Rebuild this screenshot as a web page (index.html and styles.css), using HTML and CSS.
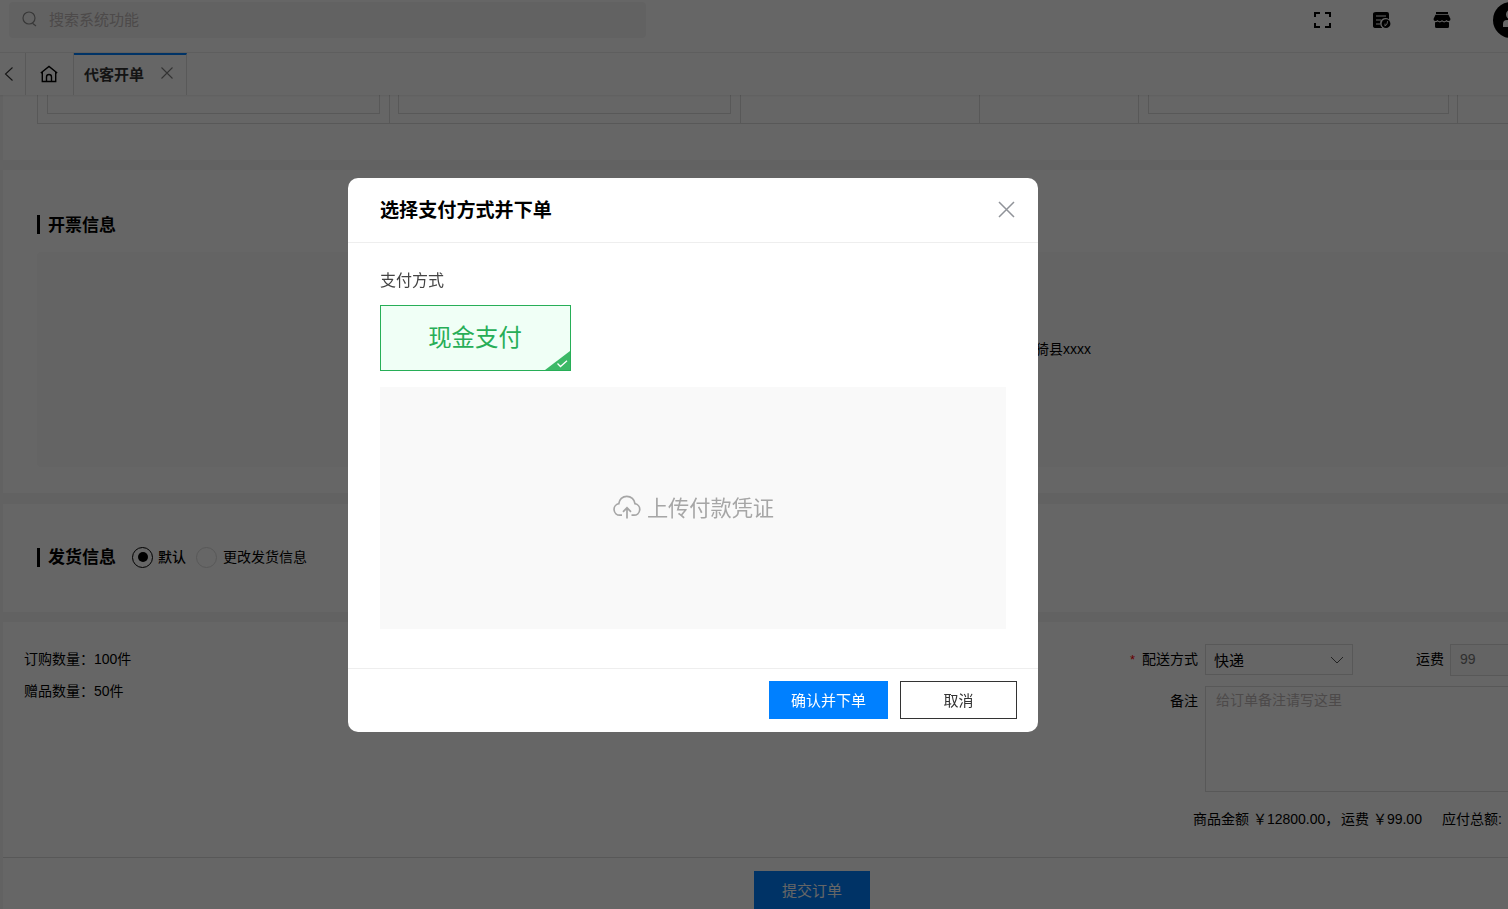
FILE: index.html
```html
<!DOCTYPE html>
<html lang="zh-CN">

<head>
    <meta charset="UTF-8">
    <title>代客开单</title>
    <link rel="stylesheet" href="styles.css">
</head>

<body>
    <div class="page">
        <div class="topbar">
            <div class="search">
                <svg width="16" height="16" viewBox="0 0 16 16" fill="none" stroke="#8c8c8c" stroke-width="1.2">
                    <circle cx="7" cy="7" r="6" />
                    <path d="M10.5 12.2 L14 15" />
                </svg>
                <span>搜索系统功能</span>
            </div>
            <div class="top-icons">
                <svg width="18" height="18" viewBox="0 0 18 18" fill="none" stroke="#000" stroke-width="2">
                    <path d="M2 6V2H7 M12 2H17V6 M17 12V16H12 M7 16H2V12" />
                </svg>
                <svg width="18" height="18" viewBox="0 0 18 18">
                    <path d="M3 1H14Q16 1 16 3V8.2A5 5 0 0 0 9 16.5V17H3Q0 17 0 15V3Q0 1 3 1Z" fill="#000" />
                    <path d="M3 5H13 M3 9H8 M3 13H7" stroke="#fff" stroke-width="1.2" />
                    <circle cx="13" cy="12.7" r="4.4" fill="#000" />
                    <path d="M14.6 10.2Q14.6 13.5 12 15.2 M12 12.6V15" fill="none" stroke="#fff" stroke-width=".9" />
                </svg>
                <svg width="18" height="18" viewBox="0 0 18 18">
                    <path d="M3 1H15V3H3Z M2.5 3.7H15.5L17.5 8Q17.5 10 15.7 10Q14.2 10 13.4 9Q12.3 10.2 11.2 10.2Q10 10.2 9 9Q8 10.2 6.8 10.2Q5.6 10.2 4.6 9Q3.8 10 2.3 10Q.5 10 .5 8Z" />
                    <path d="M2 11.3Q3.6 11.4 4.7 10.6Q6.8 12.2 9 10.6Q11.2 12.2 13.3 10.6Q14.5 11.4 16 11.3V15.5Q16 17 14.5 17H3.5Q2 17 2 15.5Z" />
                </svg>
            </div>
            <div class="avatar">
                <svg width="36" height="36" viewBox="0 0 36 36" fill="#fff">
                    <circle cx="18" cy="12.5" r="5" />
                    <path d="M10 25V22Q10 18 14 18H22Q26 18 26 22V25Z" />
                </svg>
            </div>
        </div>

        <div class="tabs">
            <div class="tab-back">
                <svg width="10" height="14" viewBox="0 0 10 14" fill="none" stroke="#333" stroke-width="1.1">
                    <path d="M8.5 .5L1.5 7L8.5 13.5" />
                </svg>
            </div>
            <div class="tab-home">
                <svg width="18" height="18" viewBox="0 0 18 18" fill="none" stroke="#000" stroke-width="1.4">
                    <path d="M.8 8L9 1.5L17.2 8 M2.3 7V16.5H15.7V7 M6.5 16.5V12Q6.5 9.5 9 9.5Q11.5 9.5 11.5 12V16.5" />
                </svg>
            </div>
            <div class="tab active">
                <span>代客开单</span>
                <svg width="12" height="12" viewBox="0 0 12 12" fill="none" stroke="#808080" stroke-width="1.1">
                    <path d="M.5 .5L11.5 11.5M11.5 .5L.5 11.5" />
                </svg>
            </div>
        </div>

        <div class="content">
            <div class="card goods">
                <div class="goods-row">
                    <div class="cell"><div class="cell-input"></div></div>
                    <div class="cell"><div class="cell-input"></div></div>
                    <div class="cell"></div>
                    <div class="cell"></div>
                    <div class="cell"><div class="cell-input"></div></div>
                    <div class="cell"></div>
                </div>
            </div>

            <div class="card invoice">
                <h3 class="title">开票信息</h3>
                <div class="invoice-panel">临猗县xxxx</div>
            </div>

            <div class="card delivery">
                <h3 class="title">发货信息</h3>
                <span class="radio checked"></span>
                <span class="radio-label on">默认</span>
                <span class="radio"></span>
                <span class="radio-label">更改发货信息</span>
            </div>

            <div class="card order">
                <div class="counts">
                    <div>订购数量：100件</div>
                    <div>赠品数量：50件</div>
                </div>
                <div class="order-form">
                    <div class="form-row">
                        <label><i>*</i>配送方式</label>
                        <div class="select">
                            <span>快递</span>
                            <svg width="14" height="8" viewBox="0 0 14 8" fill="none" stroke="#555">
                                <path d="M1 1L7 7L13 1" />
                            </svg>
                        </div>
                        <label class="freight">运费</label>
                        <div class="input disabled">99</div>
                    </div>
                    <div class="form-row">
                        <label>备注</label>
                        <div class="textarea">给订单备注请写这里</div>
                    </div>
                    <div class="totals">
                        <span class="t-goods">商品金额 ￥12800.00，</span>
                        <span class="t-freight">运费 ￥99.00</span>
                        <span>应付总额:</span>
                    </div>
                </div>
            </div>
            <div class="submit-bar">
                <div class="btn btn-submit">提交订单</div>
            </div>
        </div>
    </div>

    <div class="mask">
        <div class="dialog">
            <div class="dialog-header">
                <h3>选择支付方式并下单</h3>
                <svg width="17" height="17" viewBox="0 0 17 17" fill="none" stroke="#909399" stroke-width="1.5">
                    <path d="M1 1L16 16M16 1L1 16" />
                </svg>
            </div>
            <div class="dialog-body">
                <div class="pay-label">支付方式</div>
                <div class="pay-option">
                    <span>现金支付</span>
                    <svg class="pay-check" width="25" height="19" viewBox="0 0 25 19">
                        <path d="M25 0V19H0Z" fill="#3cb967" />
                        <path d="M12.5 12.5L15.5 15.5L22 9.8" fill="none" stroke="#fff" stroke-width="1.3" />
                    </svg>
                </div>
                <div class="upload">
                    <svg width="28" height="24" viewBox="0 0 28 24" fill="none" stroke="#a6a6a6" stroke-width="1.7">
                        <path d="M9 20.2H7A5.8 5.8 0 0 1 5.8 8.7C6.2 4.5 9.5 1.3 13.8 1.3S21.5 4.5 22 8.7A5.8 5.8 0 0 1 20.8 20.2H18.5" />
                        <path d="M14 23.5V13 M10 16.8L14 12.8L18 16.8" />
                    </svg>
                    <span>上传付款凭证</span>
                </div>
            </div>
            <div class="dialog-footer">
                <div class="btn btn-primary">确认并下单</div>
                <div class="btn btn-cancel">取消</div>
            </div>
        </div>
    </div>
</body>

</html>
```

FILE: styles.css
```css
* {
    box-sizing: border-box;
}

body,
html {
    margin: 0;
    padding: 0;
    height: 100%;
    overflow: hidden;
    font-family: "Liberation Sans", "Noto Sans CJK SC", sans-serif;
    font-size: 14px;
    color: #000;
}

h3 {
    margin: 0;
}

svg {
    display: block;
    flex: none;
}

.page {
    height: 100vh;
    overflow: hidden;
    display: flex;
    flex-direction: column;
    background: #f5f5f5;
    white-space: nowrap;
}

/* top bar */
.topbar {
    flex: none;
    display: flex;
    height: 53px;
    padding: 2px 0 0 9px;
    background: #fff;
    border-bottom: 1px solid #ebebeb;
    overflow: hidden;
}

.search {
    display: flex;
    align-items: center;
    gap: 11px;
    width: 637px;
    height: 36px;
    padding: 0 0 2px 13px;
    background: #f5f5f5;
    border-radius: 4px;
    font-size: 15px;
    color: #c0b8b8;
}

.search span {
    padding-bottom: 2px;
}

.top-icons {
    display: flex;
    align-items: center;
    gap: 42px;
    height: 36px;
    margin-left: auto;
    margin-right: 42px;
}

.avatar {
    flex: none;
    width: 36px;
    height: 36px;
    margin-right: -21px;
    border-radius: 50%;
    background: #000;
}

/* tabs */
.tabs {
    flex: none;
    display: flex;
    height: 42px;
    background: #fff;
    box-shadow: 0 1px 2px rgba(0, 0, 0, 0.08);
    position: relative;
}

.tab-back {
    display: flex;
    align-items: center;
    width: 26px;
    padding: 0 0 1px 4px;
    border-right: 1px solid #dedede;
}

.tab-home {
    display: flex;
    align-items: center;
    justify-content: center;
    width: 48px;
    padding-right: 2px;
    border-right: 1px solid #dedede;
}

.tab {
    display: flex;
    align-items: center;
    gap: 17px;
    width: 113px;
    padding: 0 0 4px 10px;
    border-right: 1px solid #dedede;
    font-size: 15px;
    font-weight: bold;
    color: #333;
}

.tab.active {
    border-top: 2px solid #0080ff;
}

/* cards */
.content {
    flex: 1;
    display: flex;
    flex-direction: column;
    padding-left: 3px;
    overflow: hidden;
}

.card {
    flex: none;
    background: #fff;
}

.goods {
    height: 65px;
    margin-bottom: 10px;
    padding-left: 34px;
    overflow: hidden;
}

.goods-row {
    display: grid;
    grid-template-columns: 353px 351px 239px 159px 319px 60px;
    height: 29px;
    border-bottom: 1px solid #dcdcdc;
}

.cell {
    padding: 0 9px 0 8px;
    border-right: 1px solid #dcdcdc;
}

.cell:first-child {
    padding: 0 9px;
    border-left: 1px solid #dcdcdc;
}

.cell:nth-child(5) {
    padding: 0 8px 0 9px;
}

.cell-input {
    height: 19px;
    border: 1px solid #dcdcdc;
    border-top: none;
}

.title {
    display: flex;
    align-items: center;
    height: 19px;
    padding: 0 0 3px 8px;
    border-left: 3px solid #000;
    font-size: 17px;
}

.invoice {
    height: 323px;
    margin-bottom: 11px;
    padding: 45px 0 0 34px;
}

.invoice-panel {
    height: 215px;
    margin-top: 18px;
    padding: 87px 0 0 984px;
    line-height: 21px;
    background: #fafafa;
    border-radius: 4px;
}

.delivery {
    display: flex;
    align-items: center;
    height: 108px;
    margin-bottom: 10px;
    padding: 0 0 2px 34px;
}

.radio {
    width: 21px;
    height: 21px;
    margin-left: 10px;
    border: 1px solid #dcdcdc;
    border-radius: 50%;
}

.radio.checked {
    display: flex;
    align-items: center;
    justify-content: center;
    margin-left: 16px;
    border-color: #000;
}

.radio.checked::after {
    content: "";
    width: 10px;
    height: 10px;
    border-radius: 50%;
    background: #000;
}

.radio-label {
    margin-left: 6px;
    padding-bottom: 3px;
}

.radio-label.on {
    margin-left: 5px;
    font-weight: 500;
}

/* order summary */
.order {
    display: flex;
    height: 235px;
    padding: 22px 0 0 22px;
    overflow: hidden;
}

.counts {
    line-height: 32px;
    margin: -1px 0 0 -1px;
}

.order-form {
    width: 378px;
    margin-left: auto;
}

.form-row {
    display: flex;
    align-items: flex-start;
    margin-bottom: 10px;
}

.form-row label {
    flex: none;
    width: 68px;
    text-align: right;
    line-height: 30px;
}

.form-row label i {
    margin-right: 7px;
    font-style: normal;
    font-size: 13px;
    color: #f00;
}

.form-row label.freight {
    width: 91px;
}

.select {
    flex: none;
    display: flex;
    align-items: center;
    justify-content: space-between;
    width: 148px;
    height: 31px;
    margin-left: 7px;
    padding: 0 8px;
    border: 1px solid #dcdcdc;
    font-size: 15px;
}

.input {
    flex: none;
    width: 80px;
    height: 32px;
    margin-left: 6px;
    padding-left: 9px;
    border: 1px solid #dcdcdc;
    line-height: 29px;
}

.input.disabled {
    background: #f9f9f9;
    color: #777;
}

.textarea {
    flex: none;
    width: 330px;
    height: 106px;
    margin-left: 7px;
    padding: 3px 10px;
    border: 1px solid #dcdcdc;
    line-height: 21px;
    color: #c0b8b8;
}

.totals {
    display: flex;
    margin: 17px 0 0 63px;
    line-height: 21px;
}

.t-goods {
    width: 148px;
}

.t-freight {
    width: 101px;
}

.submit-bar {
    flex: none;
    display: flex;
    height: 60px;
    padding: 13px 0 0 751px;
    border-top: 1px solid #dcdcdc;
    background: #fff;
}

/* buttons */
.btn {
    display: flex;
    align-items: center;
    justify-content: center;
    height: 38px;
    padding-bottom: 2px;
    font-size: 15px;
}

.btn-submit {
    width: 116px;
    background: #0080ff;
    color: #fff;
}

.btn-primary {
    width: 119px;
    background: #0080ff;
    color: #fff;
}

.btn-cancel {
    width: 117px;
    border: 1px solid #333;
    color: #333;
}

/* payment dialog */
.mask {
    position: fixed;
    inset: 0;
    padding: 178px 0 0 348px;
    background: rgba(0, 0, 0, 0.6);
}

.dialog {
    display: flex;
    flex-direction: column;
    width: 690px;
    height: 554px;
    background: #fff;
    border-radius: 10px;
}

.dialog-header {
    display: flex;
    align-items: center;
    justify-content: space-between;
    height: 65px;
    padding: 0 23px 2px 32px;
    border-bottom: 1px solid #eee;
}

.dialog-header h3 {
    font-size: 19.1px;
}

.dialog-body {
    flex: 1;
    padding: 26px 32px 0;
}

.pay-label {
    font-size: 16px;
    line-height: 24px;
    color: #444;
}

.pay-option {
    position: relative;
    display: flex;
    align-items: center;
    justify-content: center;
    width: 191px;
    height: 66px;
    margin: 12px 0 16px;
    padding: 0 1px 4px 0;
    border: 1px solid #27ae57;
    background: #f0fff6;
    font-size: 23.4px;
    color: #27ae57;
}

.pay-check {
    position: absolute;
    right: 0;
    bottom: 0;
}

.upload {
    display: flex;
    align-items: center;
    justify-content: center;
    gap: 6px;
    height: 242px;
    padding: 0 0 2px 1px;
    background: #f9f9f9;
    font-size: 21.2px;
    color: #a6a6a6;
}

.upload span {
    padding-bottom: 2px;
}

.dialog-footer {
    display: flex;
    justify-content: flex-end;
    gap: 12px;
    height: 64px;
    padding: 12px 21px 0 0;
    border-top: 1px solid #eee;
}
```
